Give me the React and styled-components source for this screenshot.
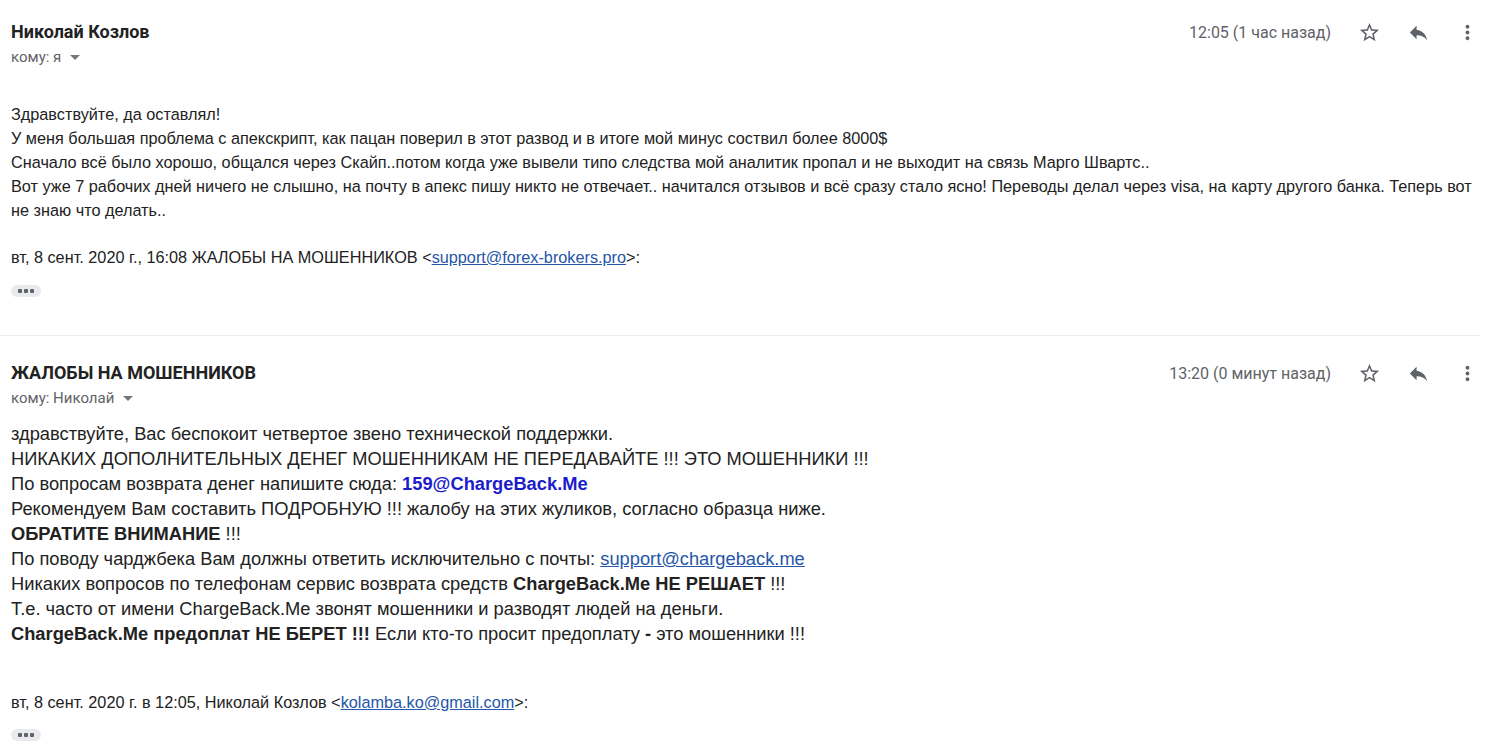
import styled, { createGlobalStyle } from "styled-components"
import { MdStarBorder, MdReply, MdMoreVert } from "react-icons/md"

const Global = createGlobalStyle`
  html, body {
    margin: 0;
    padding: 0;
    background: #fff;
  }
`

const Thread = styled.div`
  width: 1499px;
  padding-top: 21px;
`

const Message = styled.div`
  padding-left: 11px;
  margin-right: 19px;
  border-bottom: ${props => props.last ? "none" : "1px solid #eceff1"};
  padding-bottom: ${props => props.last ? "0" : "38px"};
  margin-bottom: ${props => props.last ? "0" : "26px"};
`

const Header = styled.div`
  display: flex;
  justify-content: space-between;
  align-items: flex-start;
  margin-right: -19px;
`

const Sender = styled.div`
  display: flex;
  flex-direction: column;
`

const Name = styled.div`
  font-family: Roboto, "Liberation Sans", sans-serif;
  font-weight: 700;
  font-size: 18px;
  line-height: 22px;
  color: #222;
`

const Recipient = styled.div`
  font-family: Roboto, "Liberation Sans", sans-serif;
  font-size: 15px;
  line-height: 20px;
  margin-top: 4px;
  color: #5f6368;
  display: flex;
  align-items: center;
  gap: 9px;
`

const Caret = styled.span`
  width: 0;
  height: 0;
  border-left: 5px solid transparent;
  border-right: 5px solid transparent;
  border-top: 5px solid #777;
  margin-top: 1px;
`

const Actions = styled.div`
  display: flex;
  align-items: center;
  height: 22px;
  padding-right: 13px;
  color: #5f6368;
`

const Time = styled.span`
  font-family: Roboto, "Liberation Sans", sans-serif;
  font-size: 16px;
  color: #5f6368;
  margin-right: 19px;
`

const IconBtn = styled.span`
  display: flex;
  align-items: center;
  justify-content: center;
  width: ${props => props.w}px;
  font-size: 23px;
  color: #5f6368;
`

const Body = styled.div`
  font-family: "Liberation Sans", Arial, sans-serif;
  font-size: ${props => props.size}px;
  line-height: ${props => props.lh}px;
  color: #222;
  margin-top: ${props => props.top}px;
`

const Quote = styled.div`
  font-family: "Liberation Sans", Arial, sans-serif;
  font-size: 16.25px;
  line-height: 20px;
  color: #222;
  margin-top: ${props => props.top}px;
`

const Link = styled.a`
  color: #2556a8;
  text-decoration: underline;
`

const BlueBold = styled.b`
  color: #1c1ccc;
`

const Dots = styled.div`
  display: flex;
  align-items: center;
  justify-content: center;
  gap: 2px;
  width: 30px;
  height: 12px;
  border-radius: 6px;
  background: #e8eaed;
  margin-top: ${props => props.top}px;
  span {
    width: 4px;
    height: 4px;
    background: #5f6368;
    border-radius: 1px;
  }
`

const MsgHeader = ({ name, to, time }) => (
  <Header>
    <Sender>
      <Name>{name}</Name>
      <Recipient>кому: {to} <Caret /></Recipient>
    </Sender>
    <Actions>
      <Time>{time}</Time>
      <IconBtn w={38}><MdStarBorder /></IconBtn>
      <IconBtn w={60}><MdReply /></IconBtn>
      <IconBtn w={38}><MdMoreVert /></IconBtn>
    </Actions>
  </Header>
)

const Ellipsis = ({ top }) => (
  <Dots top={top}><span /><span /><span /></Dots>
)

export default function App() {
  return (
    <>
      <Global />
      <Thread>
        <Message>
          <MsgHeader name="Николай Козлов" to="я" time="12:05 (1 час назад)" />
          <Body size={16.25} lh={24} top={35}>
            Здравствуйте, да оставлял!<br />
            У меня большая проблема с апекскрипт, как пацан поверил в этот развод и в итоге мой минус соствил более 8000$<br />
            Сначало всё было хорошо, общался через Скайп..потом когда уже вывели типо следства мой аналитик пропал и не выходит на связь Марго Швартс..<br />
            Вот уже 7 рабочих дней ничего не слышно, на почту в апекс пишу никто не отвечает.. начитался отзывов и всё сразу стало ясно! Переводы делал через visa, на карту другого банка. Теперь вот не знаю что делать..
          </Body>
          <Quote top={25}>
            вт, 8 сент. 2020 г., 16:08 ЖАЛОБЫ НА МОШЕННИКОВ &lt;<Link>support@forex-brokers.pro</Link>&gt;:
          </Quote>
          <Ellipsis top={18} />
        </Message>
        <Message last>
          <MsgHeader name="ЖАЛОБЫ НА МОШЕННИКОВ" to="Николай" time="13:20 (0 минут назад)" />
          <Body size={18.3} lh={25} top={13}>
            здравствуйте, Вас беспокоит четвертое звено технической поддержки.<br />
            НИКАКИХ ДОПОЛНИТЕЛЬНЫХ ДЕНЕГ МОШЕННИКАМ НЕ ПЕРЕДАВАЙТЕ !!! ЭТО МОШЕННИКИ !!!<br />
            По вопросам возврата денег напишите сюда: <BlueBold>159@ChargeBack.Me</BlueBold><br />
            Рекомендуем Вам составить ПОДРОБНУЮ !!! жалобу на этих жуликов, согласно образца ниже.<br />
            <b>ОБРАТИТЕ ВНИМАНИЕ</b> !!!<br />
            По поводу чарджбека Вам должны ответить исключительно с почты: <Link>support@chargeback.me</Link><br />
            Никаких вопросов по телефонам сервис возврата средств <b>ChargeBack.Me НЕ РЕШАЕТ</b> !!!<br />
            Т.е. часто от имени ChargeBack.Me звонят мошенники и разводят людей на деньги.<br />
            <b>ChargeBack.Me предоплат НЕ БЕРЕТ !!!</b> Если кто-то просит предоплату <b>-</b> это мошенники !!!
          </Body>
          <Quote top={46}>
            вт, 8 сент. 2020 г. в 12:05, Николай Козлов &lt;<Link>kolamba.ko@gmail.com</Link>&gt;:
          </Quote>
          <Ellipsis top={17} />
        </Message>
      </Thread>
    </>
  )
}
